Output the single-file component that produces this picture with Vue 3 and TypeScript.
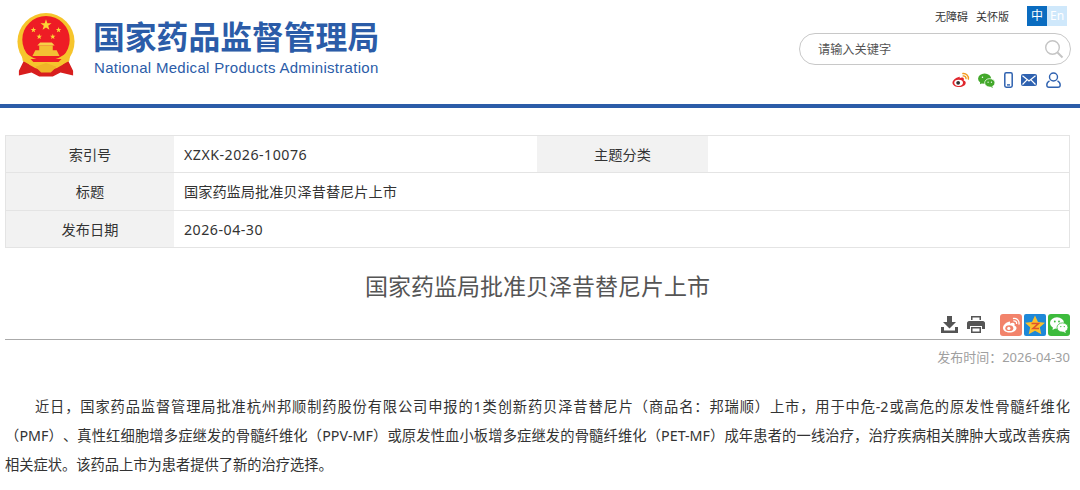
<template>
  <div class="page">
    <header class="top">
      <div class="brand">
        <svg class="emblem" width="60" height="65" viewBox="0 0 62 66">
          <path d="M9 48 L3 60 L3 65 L16 62 L24 66 L38 66 L46 62 L59 65 L59 60 L53 48 Z" fill="#d81e1e" />
          <circle cx="31" cy="30" r="29.500" fill="#f6c52c" />
          <circle cx="31" cy="28" r="24.500" fill="#ee1c25" />
          <path d="M5 38 Q31 62 57 38 L55 50 Q31 64 7 50 Z" fill="#f6c52c" />
          <path d="M17 45 L20 39 L24 39 L24 34 L38 34 L38 39 L42 39 L45 45 Z" fill="#f3c033" />
          <path d="M22 34 L40 34 L37 31 L25 31 Z" fill="#f8d048" />
          <path d="M15 48 L47 48 L44 51 L18 51 Z" fill="#ee1c25" />
          <path d="M20 56 L31 52 L42 56 L36 62 L26 62 Z" fill="#f0b428" />
          <polygon v-for="s in stars" :key="s" :points="s" fill="#fcd535" />
        </svg>
        <div class="brand-text">
          <div class="brand-cn">国家药品监督管理局</div>
          <div class="brand-en">National Medical Products Administration</div>
        </div>
      </div>
      <div class="tools">
        <div class="links">
          <span>无障碍</span>
          <span>关怀版</span>
          <div class="lang"><b class="on">中</b><b class="off">En</b></div>
        </div>
        <div class="search">
          <span>请输入关键字</span>
          <svg width="20" height="20" viewBox="0 0 20 20" fill="none" stroke="#c4c4c4" stroke-width="1.4">
            <circle cx="8.500" cy="8.500" r="6.800" />
            <path d="M13.500 13.500 L18.500 18.500" stroke-width="2" />
          </svg>
        </div>
        <div class="quick">
          <svg width="18" height="16" viewBox="0 0 19 16">
            <path d="M8 4.500 C3.500 5.500 .5 8.500 .5 11 C.5 14 4 15.500 7.500 15.500 C11.500 15.500 14.500 13.500 14.500 11 C14.500 9.300 12.800 8.800 12.300 8.600 C12.900 7 12.500 5.500 11 5.300 C10 5.100 8.800 5.700 8 6.200 C8.300 5 8.300 4.300 8 4.500 Z" fill="#e0262c" />
            <ellipse cx="7" cy="11" rx="4.600" ry="3.300" fill="#fff" />
            <circle cx="6.500" cy="11" r="2" fill="#333" />
            <path d="M11.500 1.200 C15 .8 17.800 3.500 17.300 7 M11.800 3.700 C13.600 3.500 15 4.900 14.800 6.500" fill="none" stroke="#f39a1e" stroke-width="1.500" stroke-linecap="round" />
          </svg>
          <svg class="wx" width="17" height="15" viewBox="0 0 18 16">
            <ellipse cx="7" cy="6" rx="7" ry="5.500" fill="#43a82b" />
            <path d="M2.500 9 L2 12 L6 10 Z" fill="#43a82b" />
            <ellipse cx="12.500" cy="10.500" rx="5.500" ry="4.500" fill="#43a82b" stroke="#fff" stroke-width=".8" />
            <path d="M15 14 L16 16 L12.500 14.500 Z" fill="#43a82b" />
            <circle cx="10.700" cy="9.800" r=".7" fill="#fff" />
            <circle cx="14.300" cy="9.800" r=".7" fill="#fff" />
            <circle cx="4.700" cy="4.500" r=".8" fill="#fff" />
          </svg>
          <svg class="ph" width="9" height="16" viewBox="0 0 9 16">
            <rect x=".8" y=".8" width="7.400" height="14.400" rx="1.400" fill="none" stroke="#2f62b0" stroke-width="1.500" />
            <rect x="3" y="12.200" width="3" height="1.400" fill="#2f62b0" />
          </svg>
          <svg class="ml" width="16" height="12" viewBox="0 0 16 12">
            <rect width="16" height="12" rx="2" fill="#2f62b0" />
            <path d="M1.500 1.800 L8 7 L14.500 1.800 M1.500 10.500 L6 5.800 M14.500 10.500 L10 5.800" fill="none" stroke="#fff" stroke-width="1.200" />
          </svg>
          <svg class="us" width="15" height="16" viewBox="0 0 15 16" fill="none" stroke="#2f62b0" stroke-width="1.400">
            <circle cx="7.500" cy="5" r="4" />
            <path d="M3.500 8.800 C2 9.600 .8 11 .8 13 C.8 14.500 1.800 15.200 3 15.200 L12 15.200 C13.200 15.200 14.200 14.500 14.200 13 C14.200 11 13 9.600 11.500 8.800" />
          </svg>
        </div>
      </div>
    </header>

    <main class="main">
      <div class="meta">
        <div class="cell label">索引号</div>
        <div class="cell num">XZXK-2026-10076</div>
        <div class="cell label">主题分类</div>
        <div class="cell"></div>
        <div class="cell label">标题</div>
        <div class="cell wide">国家药监局批准贝泽昔替尼片上市</div>
        <div class="cell label">发布日期</div>
        <div class="cell wide num">2026-04-30</div>
      </div>

      <h1 class="title">国家药监局批准贝泽昔替尼片上市</h1>

      <div class="share">
        <svg width="17" height="17" viewBox="0 0 17 17" fill="#555">
          <path d="M6 0 H11 V6 H15 L8.500 12.500 L2 6 H6 Z" />
          <path d="M0 11 H3 V14.500 H14 V11 H17 V17 H0 Z" />
        </svg>
        <svg class="print" width="18" height="17" viewBox="0 0 18 17" fill="#555">
          <path d="M4 0 H14 V4 H12.500 V1.500 H5.500 V4 H4 Z" />
          <path d="M2 5 H16 C17 5 18 6 18 7 V13 H15 V10 H3 V13 H0 V7 C0 6 1 5 2 5 Z" />
          <path d="M4 11 H14 V17 H4 Z" />
          <rect x="5.500" y="12.500" width="7" height="3" fill="#fff" />
        </svg>
        <svg class="btn-first" width="22" height="22" viewBox="0 0 22 22">
          <rect width="22" height="22" rx="3" fill="#f2836b" />
          <path d="M9.500 7.500 C5.500 8.500 3 11.500 3 14 C3 17 6.500 18.500 9.500 18.500 C13.500 18.500 16.500 16.500 16.500 14 C16.500 12.500 15 12 14.500 11.800 C15 10.300 14.500 9 13 8.800 C12 8.700 10.800 9.200 10 9.700 C10.300 8.500 10.200 7.400 9.500 7.500 Z" fill="#fff" />
          <ellipse cx="9.300" cy="14.200" rx="4" ry="2.900" fill="#f2836b" />
          <circle cx="8.800" cy="14.400" r="1.600" fill="#fff" />
          <path d="M13.500 4.500 C17 4.200 19.500 6.700 19 10 M13.800 6.800 C15.500 6.700 16.800 7.900 16.600 9.400" fill="none" stroke="#fff" stroke-width="1.300" stroke-linecap="round" />
        </svg>
        <svg width="22" height="22" viewBox="0 0 22 22">
          <rect width="22" height="22" rx="2" fill="#1e88d8" />
          <polygon points="11,1.500 14,8 21,8.700 15.800,13.300 17.300,20.300 11,16.700 4.700,20.300 6.200,13.300 1,8.700 8,8" fill="#fbc02d" />
          <path d="M7.500 9.500 H14.500 L9 14.500 H15" fill="none" stroke="#e0522a" stroke-width="1.600" />
        </svg>
        <svg width="22" height="22" viewBox="0 0 22 22">
          <rect width="22" height="22" rx="3" fill="#3dbb3d" />
          <ellipse cx="9" cy="9" rx="7" ry="5.800" fill="#fff" />
          <path d="M5 13 L4.500 16 L8 14 Z" fill="#fff" />
          <ellipse cx="14.500" cy="13.500" rx="5.500" ry="4.600" fill="#fff" stroke="#3dbb3d" stroke-width=".8" />
          <path d="M17 17 L18 19 L14.500 17.500 Z" fill="#fff" />
          <circle cx="6.800" cy="7.500" r=".9" fill="#3dbb3d" />
          <circle cx="11" cy="7.500" r=".9" fill="#3dbb3d" />
          <circle cx="12.800" cy="12.600" r=".7" fill="#3dbb3d" />
          <circle cx="16.300" cy="12.600" r=".7" fill="#3dbb3d" />
        </svg>
      </div>

      <div class="date">发布时间：2026-04-30</div>

      <p class="body">近日，国家药品监督管理局批准杭州邦顺制药股份有限公司申报的1类创新药贝泽昔替尼片（商品名：邦瑞顺）上市，用于中危-2或高危的原发性骨髓纤维化（PMF）、真性红细胞增多症继发的骨髓纤维化（PPV-MF）或原发性血小板增多症继发的骨髓纤维化（PET-MF）成年患者的一线治疗，治疗疾病相关脾肿大或改善疾病相关症状。该药品上市为患者提供了新的治疗选择。</p>
    </main>
  </div>
</template>

<script setup lang="ts">
function star(cx: number, cy: number, r: number): string {
  const pts: string[] = []
  for (let i = 0; i < 10; i++) {
    const rad = i % 2 === 0 ? r : r * 0.4
    const a = -Math.PI / 2 + (i * Math.PI) / 5
    pts.push(`${(cx + rad * Math.cos(a)).toFixed(2)},${(cy + rad * Math.sin(a)).toFixed(2)}`)
  }
  return pts.join(' ')
}

const stars = [star(31, 13, 6), star(18, 18, 3), star(44, 18, 3), star(24, 25, 3), star(38, 25, 3)]
</script>

<style>
html,
body {
  margin: 0;
  background: #fff;
}
</style>

<style scoped>
.page {
  width: 1080px;
  height: 490px;
  overflow: hidden;
  font-family: "Noto Sans", "Noto Sans CJK SC", sans-serif;
  color: #333;
  text-spacing-trim: space-all;
}

.top {
  height: 104px;
  box-sizing: content-box;
  border-bottom: 4px solid #2b5ca8;
  display: flex;
  justify-content: space-between;
  padding: 0 9px 0 16px;
}

.brand {
  display: flex;
  align-items: flex-start;
  gap: 17px;
  padding-top: 12px;
}

.brand-cn {
  font-size: 31.800px;
  line-height: 36px;
  font-weight: 700;
  color: #2b5ca8;
  margin-top: 7px;
}

.brand-en {
  font-family: "Liberation Sans", sans-serif;
  font-size: 15px;
  line-height: 18px;
  color: #2b5ca8;
  margin: 4px 0 0 1px;
  letter-spacing: .3px;
}

.tools {
  width: 272px;
  display: flex;
  flex-direction: column;
  align-items: flex-end;
  padding-top: 6px;
}

.links {
  display: flex;
  align-items: center;
  font-size: 11px;
  gap: 8px;
  color: #333;
  padding-right: 4px;
}

.lang {
  display: flex;
  margin-left: 10px;
}

.lang b {
  width: 20px;
  height: 20px;
  line-height: 20px;
  text-align: center;
  font-size: 12px;
  font-weight: 400;
  color: #fff;
}

.on {
  background: #0a6cc0;
}

.off {
  background: #cfe8fb;
}

.search {
  width: 272px;
  height: 32px;
  box-sizing: border-box;
  margin-top: 7px;
  border: 1px solid #c8c8c8;
  border-radius: 16px;
  display: flex;
  align-items: center;
  justify-content: space-between;
  padding: 0 6px 0 18px;
  font-size: 12.200px;
  color: #555;
}

.quick {
  display: flex;
  align-items: center;
  margin-top: 7px;
  padding-right: 10px;
}

.wx {
  margin-left: 8px;
}

.ph {
  margin-left: 9px;
}

.ml {
  margin-left: 8px;
}

.us {
  margin-left: 9px;
}

.main {
  padding: 27px 10px 0 5px;
}

.meta {
  display: grid;
  grid-template-columns: 168px 363px 171px 1fr;
  border: 1px solid #e4e4e4;
  border-bottom: 0;
  font-size: 14.200px;
}

.cell {
  height: 37.330px;
  line-height: 38px;
  box-sizing: border-box;
  border-bottom: 1px solid #e4e4e4;
  padding-left: 10px;
  background: #fff;
}

.num {
  letter-spacing: .5px;
}

.label {
  background: #f2f2f2;
  text-align: center;
  padding-left: 0;
}

.wide {
  grid-column: span 3;
}

.title {
  margin: 0;
  padding-top: 21px;
  font-size: 23px;
  line-height: 34px;
  font-weight: 400;
  text-align: center;
  color: #555;
  height: 34px;
}

.share {
  display: flex;
  justify-content: flex-end;
  align-items: center;
  margin-top: 11px;
  border-bottom: 1px solid #aaa;
  padding-bottom: 3px;
  gap: 2px;
}

.print {
  margin-left: 7px;
}

.btn-first {
  margin-left: 13px;
}

.date {
  text-align: right;
  font-size: 13px;
  line-height: 18px;
  color: #a0a0a0;
  margin-top: 8px;
}

.body {
  margin: 26px 0 0;
  font-size: 14.250px;
  line-height: 29px;
  text-indent: 30px;
  text-align: justify;
  color: #333;
}
</style>
